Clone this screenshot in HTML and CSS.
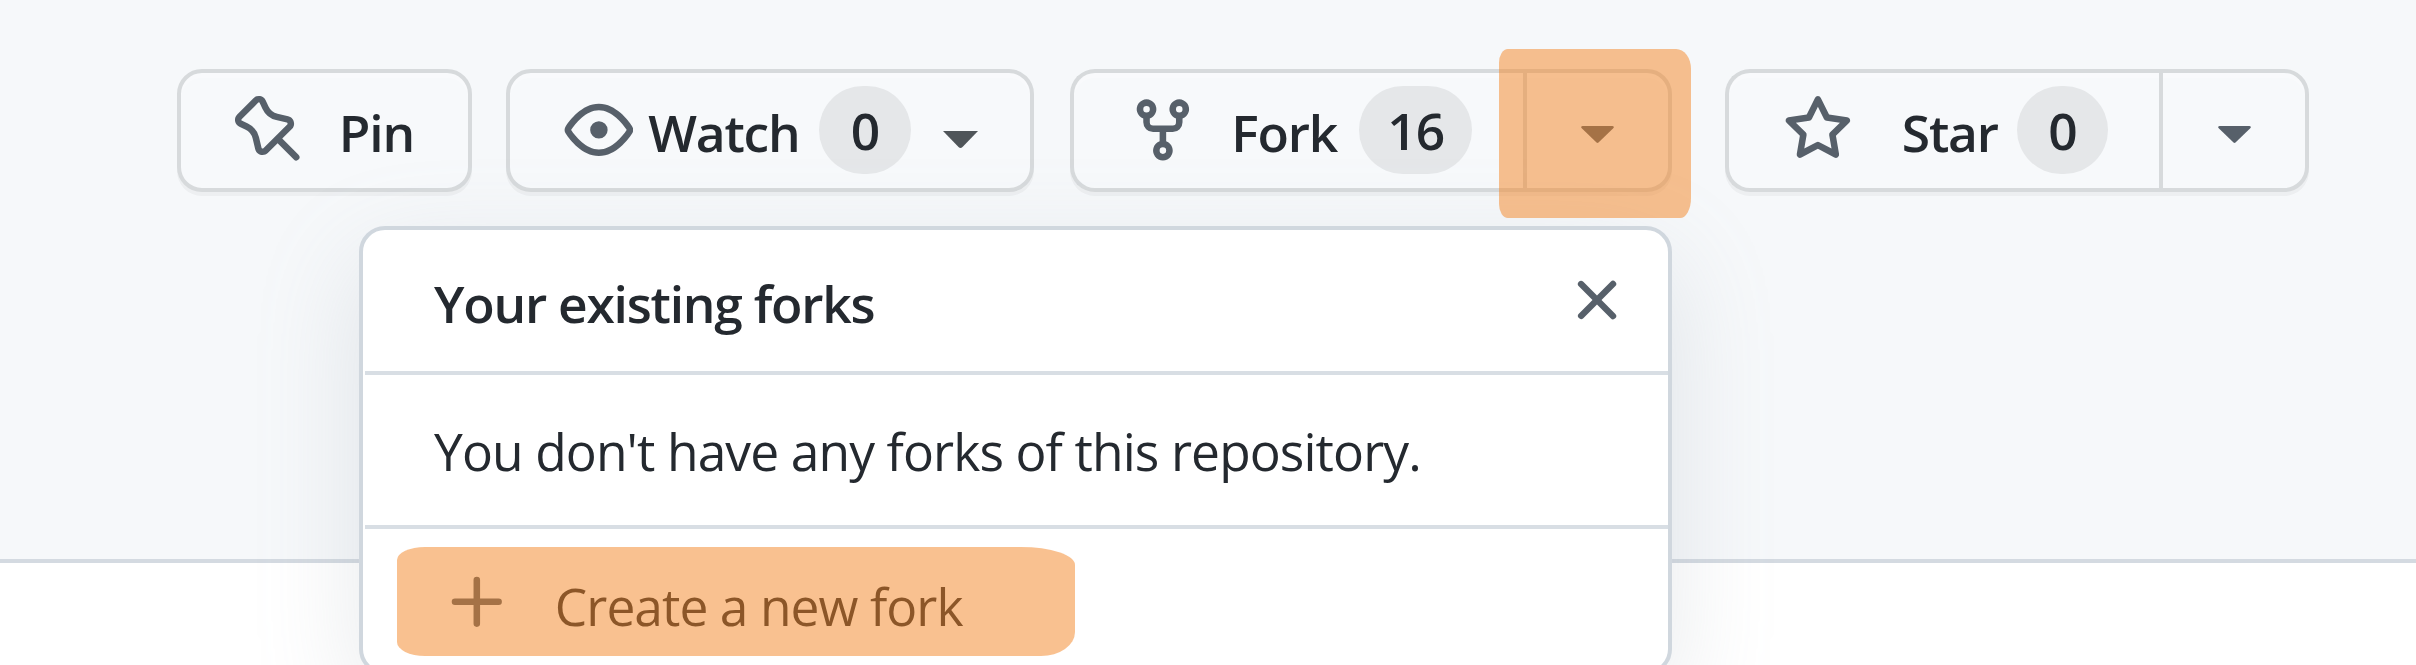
FILE: index.html
```html
<!DOCTYPE html>
<html lang="en">
<head>
<meta charset="utf-8">
<title>Repository actions</title>
<link rel="stylesheet" href="styles.css">
</head>
<body>
<header class="repo-header">
  <div class="actions">
    <button class="btn btn-pin">
      <svg class="icon" viewBox="0 0 16 16"><path fill-rule="evenodd" d="M4.456.734a1.75 1.75 0 012.826.504l.613 1.327a3.081 3.081 0 002.084 1.707l2.454.584c1.332.317 1.8 1.972.832 2.94L11.06 10l3.72 3.72a.75.75 0 11-1.061 1.06L10 11.06l-2.204 2.205c-.968.968-2.623.5-2.94-.832l-.584-2.454a3.081 3.081 0 00-1.707-2.084l-1.327-.613a1.75 1.75 0 01-.504-2.826L4.456.734zM5.92 1.866a.25.25 0 00-.404-.072L1.794 5.516a.25.25 0 00.072.404l1.328.613A4.582 4.582 0 015.73 9.63l.584 2.454a.25.25 0 00.42.12l5.47-5.47a.25.25 0 00-.12-.42L9.63 5.73a4.581 4.581 0 01-3.098-2.537L5.92 1.866z"/></svg>
      <span class="label">Pin</span>
    </button>
    <button class="btn btn-watch">
      <svg class="icon" viewBox="0 0 16 16"><path fill-rule="evenodd" d="M1.679 7.932c.412-.621 1.242-1.75 2.366-2.717C5.175 4.242 6.527 3.5 8 3.5c1.473 0 2.824.742 3.955 1.715 1.124.967 1.954 2.096 2.366 2.717a.119.119 0 010 .136c-.412.621-1.242 1.75-2.366 2.717C10.825 11.758 9.473 12.5 8 12.5c-1.473 0-2.824-.742-3.955-1.715C2.92 9.818 2.09 8.69 1.679 8.068a.119.119 0 010-.136zM8 2c-1.981 0-3.67.992-4.933 2.078C1.797 5.169.88 6.423.43 7.1a1.619 1.619 0 000 1.798c.45.678 1.367 1.932 2.637 3.024C4.329 13.008 6.019 14 8 14c1.981 0 3.67-.992 4.933-2.078 1.27-1.091 2.187-2.345 2.637-3.023a1.619 1.619 0 000-1.798c-.45-.678-1.367-1.932-2.637-3.023C11.671 2.992 9.981 2 8 2zm0 8a2 2 0 100-4 2 2 0 000 4z"/></svg>
      <span class="label">Watch</span>
      <span class="counter">0</span>
      <svg class="caret" viewBox="0 0 35 17"><path d="M0 0H35L19.500 16Q17.500 18 15.500 16Z"/></svg>
    </button>
    <div class="split split-fork">
      <button class="btn btn-main">
        <svg class="icon" viewBox="0 0 16 16"><path fill-rule="evenodd" d="M5 3.25a.75.75 0 11-1.5 0 .75.75 0 011.500 0zm0 2.122a2.250 2.250 0 10-1.500 0v.878A2.250 2.250 0 005.750 8.500h1.500v2.128a2.251 2.251 0 101.500 0V8.500h1.500a2.250 2.250 0 002.250-2.250v-.878a2.250 2.250 0 10-1.500 0v.878a.75.75 0 01-.75.75h-4.500A.75.75 0 015 6.250v-.878zm3.750 7.378a.75.75 0 11-1.500 0 .75.75 0 011.500 0zm3-8.750a.75.75 0 100-1.500.75.75 0 000 1.500z"/></svg>
        <span class="label">Fork</span>
        <span class="counter">16</span>
      </button>
      <button class="btn btn-toggle" aria-label="Existing forks">
        <svg class="caret" viewBox="0 0 33 17"><path d="M1.500 0H31.500Q34 .5 32 2.500L17.500 16.500Q16.500 17.400 15.500 16.500L1 2.500Q-1 .5 1.500 0Z"/></svg>
      </button>
    </div>
    <div class="split split-star">
      <button class="btn btn-main">
        <svg class="icon" viewBox="0 0 16 16"><path fill-rule="evenodd" d="M8 .25a.75.75 0 01.673.418l1.882 3.815 4.210.612a.75.75 0 01.416 1.279l-3.046 2.970.719 4.192a.75.75 0 01-1.088.791L8 12.347l-3.766 1.980a.75.75 0 01-1.088-.790l.720-4.194L.818 6.374a.75.75 0 01.416-1.280l4.210-.611L7.327.668A.75.75 0 018 .25zm0 2.445L6.615 5.500a.75.75 0 01-.564.410l-3.097.450 2.240 2.184a.75.75 0 01.216.664l-.528 3.084 2.769-1.456a.75.75 0 01.698 0l2.770 1.456-.530-3.084a.75.75 0 01.216-.664l2.240-2.183-3.096-.450a.75.75 0 01-.564-.410L8 2.694v.001z"/></svg>
        <span class="label">Star</span>
        <span class="counter">0</span>
      </button>
      <button class="btn btn-toggle" aria-label="Star lists">
        <svg class="caret" viewBox="0 0 33 17"><path d="M1.500 0H31.500Q34 .5 32 2.500L17.500 16.500Q16.500 17.400 15.500 16.500L1 2.500Q-1 .5 1.500 0Z"/></svg>
      </button>
    </div>
  </div>
</header>

<section class="popup">
  <div class="popup-head">
    <h2 class="popup-title">Your existing forks</h2>
    <svg class="close" viewBox="0 0 16 16"><path fill-rule="evenodd" d="M3.720 3.720a.75.75 0 011.060 0L8 6.940l3.220-3.220a.75.75 0 111.060 1.060L9.060 8l3.220 3.220a.75.75 0 11-1.060 1.060L8 9.060l-3.220 3.220a.75.75 0 01-1.060-1.060L6.940 8 3.720 4.780a.75.75 0 010-1.060z"/></svg>
  </div>
  <p class="popup-body">You don't have any forks of this repository.</p>
  <div class="popup-create">
    <svg class="icon" viewBox="0 0 16 16"><path fill-rule="evenodd" d="M7.750 2a.75.75 0 01.75.75V7h4.250a.75.75 0 110 1.500H8.500v4.250a.75.75 0 11-1.500 0V8.500H2.750a.75.75 0 010-1.500H7V2.750A.75.75 0 017.750 2z"/></svg>
    <span class="create-text">Create a new fork</span>
  </div>
</section>

<div class="mark mark-toggle"></div>
<div class="mark mark-create"></div>
</body>
</html>
```

FILE: styles.css
```css
* { box-sizing: border-box; }

body {
  margin: 0;
  height: 665px;
  position: relative;
  overflow: hidden;
  background: #fff;
  color: #24292f;
  font-family: "Open Sans", "Noto Sans", sans-serif;
  font-size: 51.500px;
}

.repo-header {
  height: 563px;
  padding: 68.500px 0 0 177px;
  background: #f6f8fa;
  border-bottom: 4px solid #d4dae1;
}

.actions { display: flex; height: 123.500px; }

.btn {
  display: flex;
  align-items: center;
  height: 100%;
  padding: 0;
  border: 4px solid #d7dadc;
  border-radius: 25px;
  background: #f7f9fb;
  box-shadow: 0 4px 0 rgba(27, 31, 36, .04), inset 0 5px 0 rgba(255, 255, 255, .25);
  color: inherit;
  font: inherit;
  font-weight: 600;
  text-align: left;
}

.icon { display: block; flex: none; width: 69.800px; height: 69.800px; fill: #57606a; }
.label { flex: none; line-height: 70px; padding-top: 4px; letter-spacing: -1.200px; white-space: nowrap; }

.btn-pin { width: 295px; padding-left: 53px; }
.btn-pin .label { margin-left: 35px; }

.btn-watch { width: 528.500px; margin-left: 33.500px; padding-left: 54px; }
.btn-watch .label { width: 171px; margin-left: 15px; }

.counter {
  display: flex;
  flex: none;
  align-items: center;
  justify-content: center;
  width: 91.500px;
  height: 88px;
  border-radius: 44px;
  background: #e5e7e9;
  letter-spacing: -1px;
}

.caret { display: block; flex: none; width: 33px; height: 17px; fill: #57606a; }
.btn-watch .caret { width: 35px; margin: 19px 0 0 32px; fill: #4f5559; }

.split { display: flex; }
.split-fork { width: 602px; margin-left: 35.500px; }
.split-star { width: 584px; margin-left: 53.500px; }
.btn-main { border-right: 0; border-radius: 25px 0 0 25px; padding-left: 54px; }
.btn-toggle { flex: 1; justify-content: center; padding-top: 8px; border-radius: 0 25px 25px 0; }
.split-fork .btn-main { width: 453.500px; }
.split-fork .label { width: 128px; margin-left: 34px; }
.split-fork .counter { width: 113px; }
.split-star .btn-main { width: 434px; }
.split-star .label { width: 115px; margin-left: 49px; }

.popup {
  position: absolute;
  left: 359px;
  top: 225.500px;
  width: 1312.500px;
  height: 449px;
  border: 4px solid #d0d7de;
  border-radius: 26px;
  background: #fff;
  box-shadow: 0 35px 105px rgba(140, 149, 159, .2);
}

.popup-head {
  display: flex;
  align-items: center;
  justify-content: space-between;
  height: 145px;
  margin-left: 2px;
  padding: 0 36.500px 0 69px;
  border-bottom: 4px solid #d8dee4;
}
.popup-title { margin: 6px 0 0; font-size: 51.500px; font-weight: 600; line-height: 70px; letter-spacing: -1.240px; white-space: nowrap; }
.close { width: 68px; height: 68px; fill: #57606a; }

.popup-body {
  height: 154px;
  margin: 0 0 0 2px;
  padding: 41px 0 0 69px;
  border-bottom: 4px solid #d8dee4;
  line-height: 70px;
  letter-spacing: -.890px;
  white-space: nowrap;
}

.popup-create { display: flex; align-items: center; margin: 36px 0 0 80px; }
.create-text { margin-left: 42px; line-height: 70px; padding-top: 6px; letter-spacing: -.950px; white-space: nowrap; }

.mark { position: absolute; background: rgba(243, 131, 33, .5); }
.mark-toggle { left: 1499px; top: 49px; width: 192px; height: 168.700px; border-radius: 9px 15px 11px 9px / 14px 20px 20px 14px; }
.mark-create { left: 397px; top: 547px; width: 678px; height: 109px; border-radius: 28px 54px 34px 28px / 13px 18px 24px 14px; }
```
